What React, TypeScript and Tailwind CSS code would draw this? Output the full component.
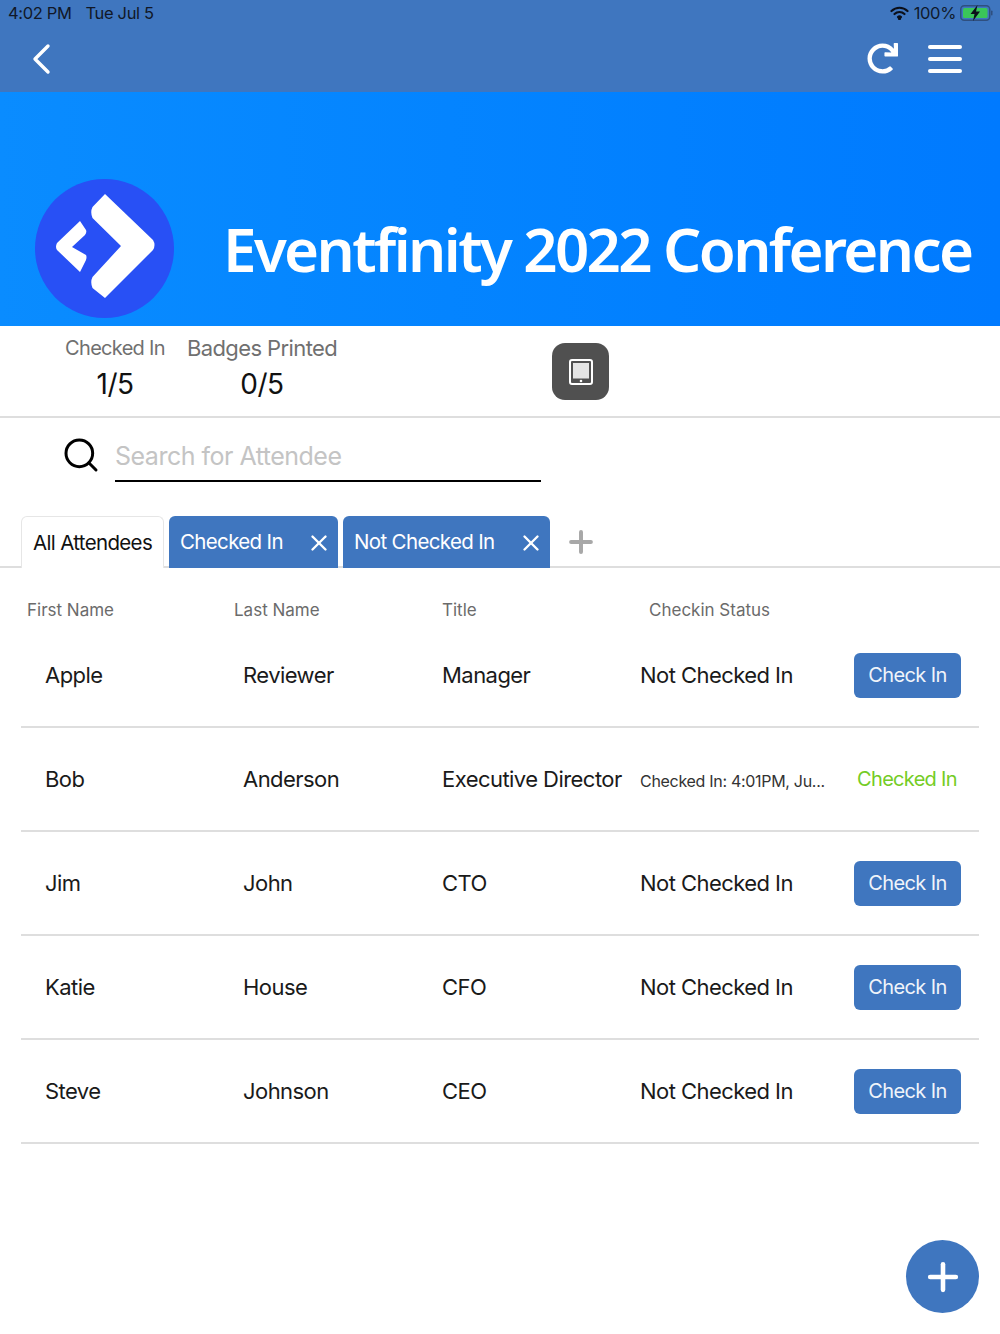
import { Plus, Search, X } from "lucide-react";
import { FaRedo } from "react-icons/fa";

const attendees = [
  { first: "Apple", last: "Reviewer", title: "Manager", checkedIn: false },
  { first: "Bob", last: "Anderson", title: "Executive Director", checkedIn: true },
  { first: "Jim", last: "John", title: "CTO", checkedIn: false },
  { first: "Katie", last: "House", title: "CFO", checkedIn: false },
  { first: "Steve", last: "Johnson", title: "CEO", checkedIn: false },
];

function StatusBar() {
  return (
    <div className="flex h-[26px] items-center justify-between pl-[8px] pr-[7px] text-[16.5px] tracking-[-0.35px] text-[#111827]">
      <div className="flex gap-[14px]">
        <span>4:02 PM</span>
        <span>Tue Jul 5</span>
      </div>
      <div className="flex items-center gap-[5px]">
        <svg width="19" height="14" viewBox="0 0 19 14" fill="none" stroke="#0b0f19" strokeWidth="2.2" strokeLinecap="round">
          <path d="M1.5 5a11.5 11.5 0 0 1 16 0" />
          <path d="M4.5 8a7.2 7.2 0 0 1 10 0" />
          <path d="M8 11a2.2 2.2 0 0 1 3 0" />
          <circle cx="9.5" cy="12.4" r="0.6" fill="#0b0f19" />
        </svg>
        <span className="text-[#0f1a2c]">100%</span>
        <svg width="33" height="16" viewBox="0 0 33 16" className="-ml-[1px]">
          <rect x="0.75" y="0.75" width="29" height="14.5" rx="3.5" fill="none" stroke="#2f4f7f" strokeWidth="1.5" />
          <rect x="3" y="3" width="24.5" height="10" rx="1.5" fill="#3ac659" />
          <rect x="31" y="5.5" width="1.5" height="5" rx="0.7" fill="#2f4f7f" />
          <path d="M17.5 0 10.5 9h4l-1.5 7 7-9.5h-4z" fill="#0b0f19" />
        </svg>
      </div>
    </div>
  );
}

function Nav() {
  return (
    <div className="flex h-[66px] items-center justify-between pb-[1px] pl-[31px] pr-[38px]">
      <svg width="22" height="32" viewBox="0 0 22 32" fill="none" stroke="white" strokeWidth="3.4" strokeLinecap="round" strokeLinejoin="round">
        <path d="M17 3 4 16l13 13" />
      </svg>
      <div className="flex items-center gap-[30px]">
        <FaRedo size={31} color="white" />
        <div className="flex w-[34px] flex-col gap-[8px]">
          <div className="h-[4px] rounded-sm bg-white" />
          <div className="h-[4px] rounded-sm bg-white" />
          <div className="h-[4px] rounded-sm bg-white" />
        </div>
      </div>
    </div>
  );
}

function Banner() {
  return (
    <div className="flex h-[234px] items-end bg-gradient-to-r from-[#0a8cff] to-[#007aff] pb-[8px] pl-[35px]">
      <div className="h-[139px] w-[139px] shrink-0 rounded-full bg-[#2850f5]">
        <svg width="139" height="139" viewBox="0 0 139 139" fill="white">
          <path d="M70 15 118 61Q121 66 118 71L70 119 57.5 109Q55 103 57.5 98L86 67 57.5 39Q55 33 57.5 28Z" />
          <path d="M45 42 22 64Q20 68 22 71L45 93 51 81Q52 78 51 76L37 68 50 56Q52 53 51 51Z" />
        </svg>
      </div>
      <h1 className="mb-[29px] ml-[49px] whitespace-nowrap font-['Noto_Sans'] text-[60px] font-semibold leading-[80px] tracking-[-2.6px] text-white">
        Eventfinity 2022 Conference
      </h1>
    </div>
  );
}

function Stats() {
  return (
    <div className="flex h-[92px] border-b-2 border-[#dedede] pl-[65px] pt-[8px]">
      <div className="flex w-[100px] flex-col items-center">
        <span className="whitespace-nowrap text-[20px] leading-[28px] tracking-[-0.7px] text-[#707070]">Checked In</span>
        <span className="mt-[6px] text-[28px] leading-[32px] tracking-[-0.5px] text-[#111]">1/5</span>
      </div>
      <div className="ml-[22px] flex w-[150px] flex-col items-center">
        <span className="whitespace-nowrap text-[22px] leading-[28px] tracking-[-0.6px] text-[#707070]">Badges Printed</span>
        <span className="mt-[6px] text-[28px] leading-[32px] tracking-[-0.5px] text-[#111]">0/5</span>
      </div>
      <div className="ml-[215px] mt-[9px] flex h-[57px] w-[57px] items-center justify-center rounded-[13px] bg-[#505050]">
        <svg width="24" height="26" viewBox="0 0 24 26">
          <rect x="1" y="1" width="22" height="24" rx="2" fill="none" stroke="white" strokeWidth="2" />
          <rect x="4" y="4" width="16" height="15.5" fill="#e4e4e4" />
          <circle cx="12" cy="22" r="1.3" fill="white" />
        </svg>
      </div>
    </div>
  );
}

function SearchBar() {
  return (
    <div className="flex h-[98px] items-start pl-[61px] pt-[19px]">
      <Search size={40} color="black" strokeWidth={1.8} className="-mt-[2px]" />
      <div className="ml-[14px] flex h-[45px] w-[426px] items-center border-b-2 border-black pb-[4px] text-[25px] tracking-[-0.5px] text-[#c4c4c4]">
        Search for Attendee
      </div>
    </div>
  );
}

function Tabs() {
  return (
    <div className="flex h-[52px] items-stretch border-b-2 border-[#dedede] pl-[21px] text-[20.5px] tracking-[-0.65px]">
      <div className="z-10 -mb-[2px] flex w-[143px] items-center justify-center rounded-t-[6px] border border-b-0 border-[#e6e6e6] bg-white pt-[1px] text-[#111]">
        All Attendees
      </div>
      <div className="-mb-[2px] ml-[5px] flex w-[169px] items-center justify-between rounded-t-[6px] bg-[#3f76bf] pl-[11px] pr-[6px] pt-[1px] text-white">
        Checked In
        <X size={26} strokeWidth={2.2} />
      </div>
      <div className="-mb-[2px] ml-[5px] flex w-[207px] items-center justify-between rounded-t-[6px] bg-[#3f76bf] pl-[11px] pr-[6px] pt-[1px] text-white">
        Not Checked In
        <X size={26} strokeWidth={2.2} />
      </div>
      <div className="ml-[14px] flex items-center pt-[1px]">
        <Plus size={34} color="#a8a8a8" strokeWidth={2.8} />
      </div>
    </div>
  );
}

function AttendeeTable() {
  return (
    <div className="px-[21px]">
      <div className="grid h-[56px] grid-cols-[207px_208px_207px_1fr] items-center pl-[6px] pt-[30px] text-[17px] text-[#6b6b6b]">
        <span>First Name</span>
        <span>Last Name</span>
        <span>Title</span>
        <span>Checkin Status</span>
      </div>
      {attendees.map((a) => (
        <div
          key={a.first}
          className="grid h-[104px] grid-cols-[198px_199px_198px_214px_106px] items-center border-b-2 border-[#dedede] pl-[24px] text-[22px] tracking-[-0.55px] text-[#1a1a1a]"
        >
          <span>{a.first}</span>
          <span>{a.last}</span>
          <span className="whitespace-nowrap">{a.title}</span>
          {a.checkedIn ? (
            <span className="mt-[3px] whitespace-nowrap text-[16px] tracking-[-0.3px] text-[#333]">Checked In: 4:01PM, Ju...</span>
          ) : (
            <span className="whitespace-nowrap">Not Checked In</span>
          )}
          {a.checkedIn ? (
            <span className="whitespace-nowrap text-center text-[20px] tracking-[-0.7px] text-[#74cc25]">Checked In</span>
          ) : (
            <button className="flex h-[45px] w-[107px] items-center justify-center rounded-[6px] bg-[#3f76bf] text-[20px] tracking-[-0.6px] text-[#f0f4fa]">
              Check In
            </button>
          )}
        </div>
      ))}
    </div>
  );
}

export default function App() {
  return (
    <div className="relative h-[1334px] w-[1000px] overflow-hidden bg-white font-['Inter',sans-serif]">
      <div className="h-[92px] bg-[#3f76bf]">
        <StatusBar />
        <Nav />
      </div>
      <Banner />
      <Stats />
      <SearchBar />
      <Tabs />
      <AttendeeTable />
      <button className="absolute left-[906px] top-[1240px] flex h-[73px] w-[73px] items-center justify-center rounded-full bg-[#3f76bf]">
        <Plus size={44} color="white" strokeWidth={2.5} />
      </button>
    </div>
  );
}
